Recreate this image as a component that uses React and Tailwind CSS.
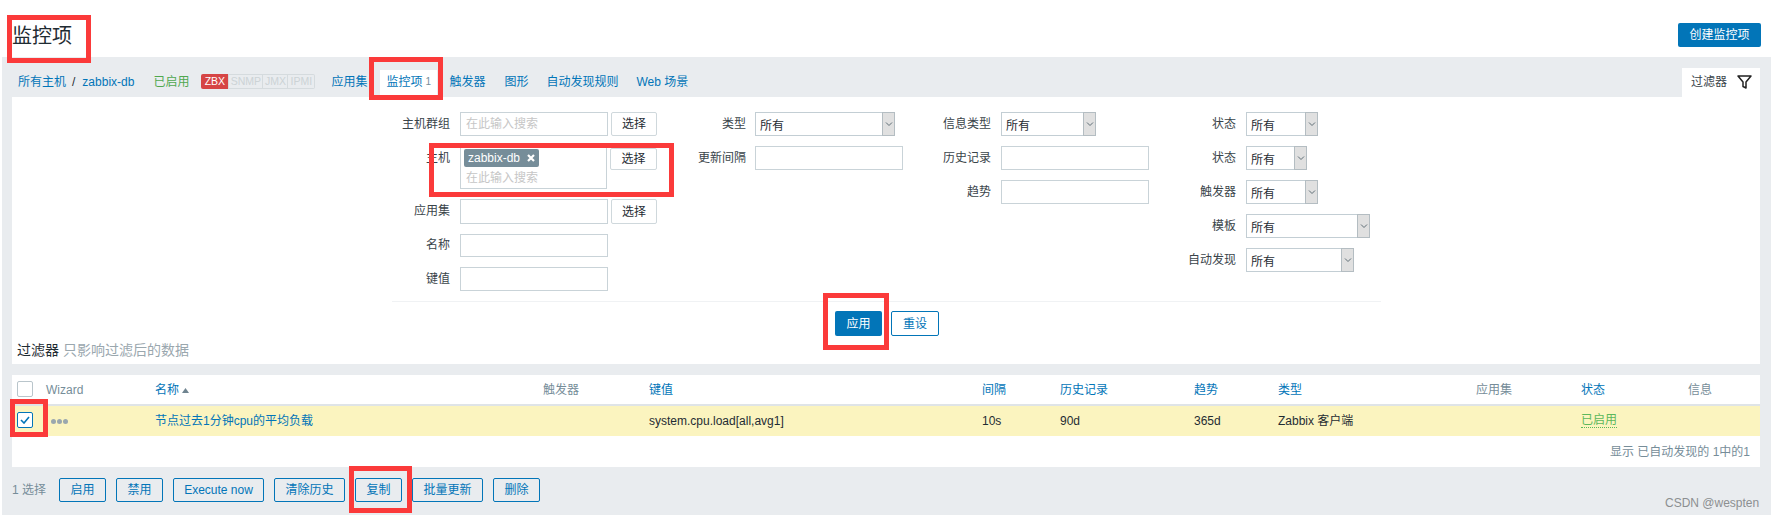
import React from "react";

const Mark = ({ className }) => (
  <div className={"absolute border-[5px] border-[#fb3a3a] pointer-events-none " + className} />
);

const Chevron = () => (
  <svg width="8" height="6" viewBox="0 0 8 6" fill="none" stroke="#5f6e76" strokeWidth="1">
    <path d="M1 1.5 L4 4.5 L7 1.5" />
  </svg>
);

const Select = ({ className }) => (
  <div className={"flex h-[24px] items-stretch border-y border-l border-[#c3ced4] bg-white " + className}>
    <span className="flex-1 pl-[4px] pt-[1px] leading-[24px] text-[12px] text-[#1f2c33]">所有</span>
    <span className="-my-px flex w-[13px] items-center justify-center border border-[#b4bdc2] bg-[#e0e0e0]">
      <Chevron />
    </span>
  </div>
);

const Input = ({ placeholder, className }) => (
  <input
    readOnly
    placeholder={placeholder}
    className={"w-[148px] border border-[#c9d3d8] bg-white px-[5px] text-[12px] placeholder:text-[#c6c6c6] outline-none " + className}
  />
);

const Pick = ({ className }) => (
  <button className={"ml-[3px] w-[47px] border border-[#cfd8dc] bg-white text-[12px] text-[#1f2c33] rounded-[2px] " + className}>选择</button>
);

const Label = ({ children, className }) => (
  <div className={"text-right text-[12px] text-[#3a444a] shrink-0 " + className}>{children}</div>
);

const Action = ({ children, className }) => (
  <button className={"h-[24px] border border-[#0275b8] rounded-[2px] text-[12px] text-[#0275b8] " + className}>{children}</button>
);

const Head = ({ children, link }) => (
  <div className={"text-[12px] leading-[30px] " + (link ? "text-[#0275b8]" : "text-[#768d99]")}>{children}</div>
);

const Cell = ({ children }) => <div className="text-[12px] leading-[30px] text-[#1f2c33]">{children}</div>;

export default function App() {
  return (
    <div
      className="relative h-[520px] w-[1776px] overflow-hidden bg-white"
      style={{ fontFamily: "'Liberation Sans','Noto Sans CJK SC',sans-serif" }}
    >
      <header className="flex h-[57px] items-start justify-between pl-[12px] pr-[15px]">
        <h1 className="pt-[21px] text-[20px] leading-[30px] font-normal text-[#1f2c33]">监控项</h1>
        <button className="mt-[23px] h-[24px] w-[83px] rounded-[2px] bg-[#0275b8] text-[12px] text-white">创建监控项</button>
      </header>

      <main className="ml-[2px] h-[458px] w-[1769px] bg-[#e9ecef] pl-[10px] pr-[11px]">
        <nav className="flex h-[40px] items-end text-[12px] text-[#0275b8]">
          <div className="flex h-[27px] flex-1 items-center pb-[4px]">
            <a className="ml-[6px]">所有主机</a>
            <span className="ml-[6px] text-[#1f2c33]">/</span>
            <a className="ml-[7px]">zabbix-db</a>
            <span className="ml-[19px] text-[#4fa84f]">已启用</span>
            <div className="ml-[12px] flex h-[15px] text-[10.5px] leading-[15px]">
              <span className="w-[27px] rounded-l-[2px] bg-[#d64545] text-center text-white">ZBX</span>
              <span className="w-[35px] border border-[#d5dbde] text-center leading-[13px] text-[#ccd3d6]">SNMP</span>
              <span className="w-[25px] border-y border-r border-[#d5dbde] text-center leading-[13px] text-[#ccd3d6]">JMX</span>
              <span className="w-[27px] rounded-r-[2px] border-y border-r border-[#d5dbde] text-center leading-[13px] text-[#ccd3d6]">IPMI</span>
            </div>
            <a className="ml-[16px]">应用集</a>
            <div className="ml-[13px] mt-[4px] flex h-[27px] w-[57px] items-center bg-white pb-[4px] pl-[6px]">
              监控项<span className="ml-[3px] text-[10px] text-[#768d99]">1</span>
            </div>
            <a className="ml-[12px]">触发器</a>
            <a className="ml-[19px]">图形</a>
            <a className="ml-[18px]">自动发现规则</a>
            <a className="ml-[18px]">Web 场景</a>
          </div>
          <div className="flex h-[29px] w-[78px] items-center bg-white pl-[9px] pb-[2px] text-[#3a444a]">
            过滤器
            <svg className="ml-[10px]" width="15" height="14" viewBox="0 0 15 14" fill="none" stroke="#222" strokeWidth="1.5" strokeLinejoin="round">
              <path d="M1 1 H14 L9 7 V13 L6 11.5 V7 Z" />
            </svg>
          </div>
        </nav>

        <section className="h-[267px] bg-white">
          <div className="flex h-[204px] pt-[15px]">
            <div className="flex w-[645px] flex-col">
              <div className="flex h-[24px]">
                <Label className="w-[438px] leading-[24px]">主机群组</Label>
                <Input placeholder="在此输入搜索" className="ml-[10px] h-[24px]" />
                <Pick className="h-[24px]" />
              </div>
              <div className="mt-[12px] flex h-[41px] items-start">
                <Label className="w-[438px] leading-[20px]">主机</Label>
                <div className="ml-[10px] h-[41px] w-[148px] border border-t-0 border-[#c9d3d8] pl-[3px] pt-[1px]">
                  <div className="flex h-[18px] w-[75px] items-center rounded-[2px] bg-[#768d99] pl-[4px] text-[12px] text-white">
                    zabbix-db
                    <svg className="ml-[7px]" width="8" height="8" viewBox="0 0 8 8" stroke="#fff" strokeWidth="2.2">
                      <path d="M1 1 L7 7 M7 1 L1 7" />
                    </svg>
                  </div>
                  <div className="pl-[2px] pt-[2px] text-[12px] leading-[18px] text-[#c6c6c6]">在此输入搜索</div>
                </div>
                <Pick className="h-[22px]" />
              </div>
              <div className="mt-[10px] flex h-[25px]">
                <Label className="w-[438px] leading-[24px]">应用集</Label>
                <Input className="ml-[10px] h-[25px]" />
                <Pick className="h-[25px]" />
              </div>
              <div className="mt-[10px] flex h-[23px]">
                <Label className="w-[438px] leading-[23px]">名称</Label>
                <Input className="ml-[10px] h-[23px]" />
              </div>
              <div className="mt-[10px] flex h-[24px]">
                <Label className="w-[438px] leading-[24px]">键值</Label>
                <Input className="ml-[10px] h-[24px]" />
              </div>
            </div>

            <div className="flex w-[246px] flex-col gap-[10px]">
              <div className="flex h-[24px]">
                <Label className="w-[89px] leading-[24px]">类型</Label>
                <Select className="ml-[9px] w-[140px]" />
              </div>
              <div className="flex h-[24px]">
                <Label className="w-[89px] leading-[24px]">更新间隔</Label>
                <Input className="ml-[9px] h-[24px]" />
              </div>
            </div>

            <div className="flex w-[246px] flex-col gap-[10px]">
              <div className="flex h-[24px]">
                <Label className="w-[88px] leading-[24px]">信息类型</Label>
                <Select className="ml-[10px] w-[95px]" />
              </div>
              <div className="flex h-[24px]">
                <Label className="w-[88px] leading-[24px]">历史记录</Label>
                <Input className="ml-[10px] h-[24px]" />
              </div>
              <div className="flex h-[24px]">
                <Label className="w-[88px] leading-[24px]">趋势</Label>
                <Input className="ml-[10px] h-[24px]" />
              </div>
            </div>

            <div className="flex flex-1 flex-col gap-[10px]">
              <div className="flex h-[24px]">
                <Label className="w-[87px] leading-[24px]">状态</Label>
                <Select className="ml-[10px] w-[72px]" />
              </div>
              <div className="flex h-[24px]">
                <Label className="w-[87px] leading-[24px]">状态</Label>
                <Select className="ml-[10px] w-[61px]" />
              </div>
              <div className="flex h-[24px]">
                <Label className="w-[87px] leading-[24px]">触发器</Label>
                <Select className="ml-[10px] w-[72px]" />
              </div>
              <div className="flex h-[24px]">
                <Label className="w-[87px] leading-[24px]">模板</Label>
                <Select className="ml-[10px] w-[124px]" />
              </div>
              <div className="flex h-[24px]">
                <Label className="w-[87px] leading-[24px]">自动发现</Label>
                <Select className="ml-[10px] w-[108px]" />
              </div>
            </div>
          </div>

          <div className="ml-[380px] h-px w-[989px] bg-[#f0f2f4]" />

          <div className="ml-[823px] mt-[9px] flex gap-[9px]">
            <button className="h-[25px] w-[47px] rounded-[2px] bg-[#0275b8] text-[12px] text-white">应用</button>
            <button className="h-[25px] w-[48px] rounded-[2px] border border-[#0275b8] text-[12px] text-[#0275b8]">重设</button>
          </div>

          <div className="mt-[4px] pl-[5px] text-[14px] leading-[20px] text-[#9aa7ae]">
            <span className="text-[#1f2c33]">过滤器</span> 只影响过滤后的数据
          </div>
        </section>

        <section className="mt-[11px] h-[92px] bg-white">
          <div className="grid h-[31px] grid-cols-[34px_109px_388px_106px_333px_78px_134px_84px_198px_105px_107px_72px] border-b-2 border-[#dfe4e7]">
            <div className="pl-[5px] pt-[6px]">
              <div className="h-[16px] w-[16px] rounded-[2px] border border-[#b9c5cb]" />
            </div>
            <Head>Wizard</Head>
            <div className="flex h-[30px] items-center text-[12px] text-[#0275b8]">
              名称
              <svg className="ml-[3px]" width="7" height="5" viewBox="0 0 7 5" fill="#6f8490"><path d="M3.5 0 L7 5 H0 Z" /></svg>
            </div>
            <Head>触发器</Head>
            <Head link>键值</Head>
            <Head link>间隔</Head>
            <Head link>历史记录</Head>
            <Head link>趋势</Head>
            <Head link>类型</Head>
            <Head>应用集</Head>
            <Head link>状态</Head>
            <Head>信息</Head>
          </div>

          <div className="grid h-[30px] grid-cols-[34px_109px_388px_106px_333px_78px_134px_84px_198px_105px_107px_72px] bg-[#fbf4bf]">
            <div className="pl-[5px] pt-[6px]">
              <div className="flex h-[16px] w-[16px] items-center justify-center rounded-[2px] border border-[#0275b8] bg-white">
                <svg width="10" height="8" viewBox="0 0 10 8" fill="none" stroke="#0275b8" strokeWidth="1.6">
                  <path d="M1 4 L4 7 L9 1" />
                </svg>
              </div>
            </div>
            <div className="flex items-center gap-[1px] pl-[5px]">
              <span className="h-[5px] w-[5px] rounded-full bg-[#9aa7ae]" />
              <span className="h-[5px] w-[5px] rounded-full bg-[#9aa7ae]" />
              <span className="h-[5px] w-[5px] rounded-full bg-[#9aa7ae]" />
            </div>
            <div className="text-[12px] leading-[30px] text-[#0275b8]">节点过去1分钟cpu的平均负载</div>
            <div />
            <Cell>system.cpu.load[all,avg1]</Cell>
            <Cell>10s</Cell>
            <Cell>90d</Cell>
            <Cell>365d</Cell>
            <Cell>Zabbix 客户端</Cell>
            <div />
            <div className="pt-[5px] text-[12px]">
              <span className="border-b border-dotted border-[#5cb85c] text-[#5cb85c]">已启用</span>
            </div>
            <div />
          </div>

          <div className="h-[31px] pr-[10px] text-right text-[12px] leading-[32px] text-[#768d99]">显示 已自动发现的 1中的1</div>
        </section>

        <div className="mt-[11px] flex items-center gap-[10px]">
          <span className="-mr-[10px] w-[47px] text-[12px] text-[#768d99]">1 选择</span>
          <Action className="w-[47px]">启用</Action>
          <Action className="w-[47px]">禁用</Action>
          <Action className="w-[91px]">Execute now</Action>
          <Action className="w-[71px]">清除历史</Action>
          <Action className="w-[47px]">复制</Action>
          <Action className="w-[71px]">批量更新</Action>
          <Action className="w-[47px]">删除</Action>
        </div>
      </main>

      <div className="absolute left-[1665px] top-[495px] text-[12px] leading-[16px] text-[#8c8f91]">CSDN @wespten</div>

      <Mark className="left-[7px] top-[15px] h-[48px] w-[84px]" />
      <Mark className="left-[369px] top-[57px] h-[43px] w-[74px]" />
      <Mark className="left-[429px] top-[143px] h-[54px] w-[245px]" />
      <Mark className="left-[823px] top-[293px] h-[57px] w-[66px]" />
      <Mark className="left-[10px] top-[399px] h-[38px] w-[38px]" />
      <Mark className="left-[349px] top-[466px] h-[47px] w-[63px]" />
    </div>
  );
}
